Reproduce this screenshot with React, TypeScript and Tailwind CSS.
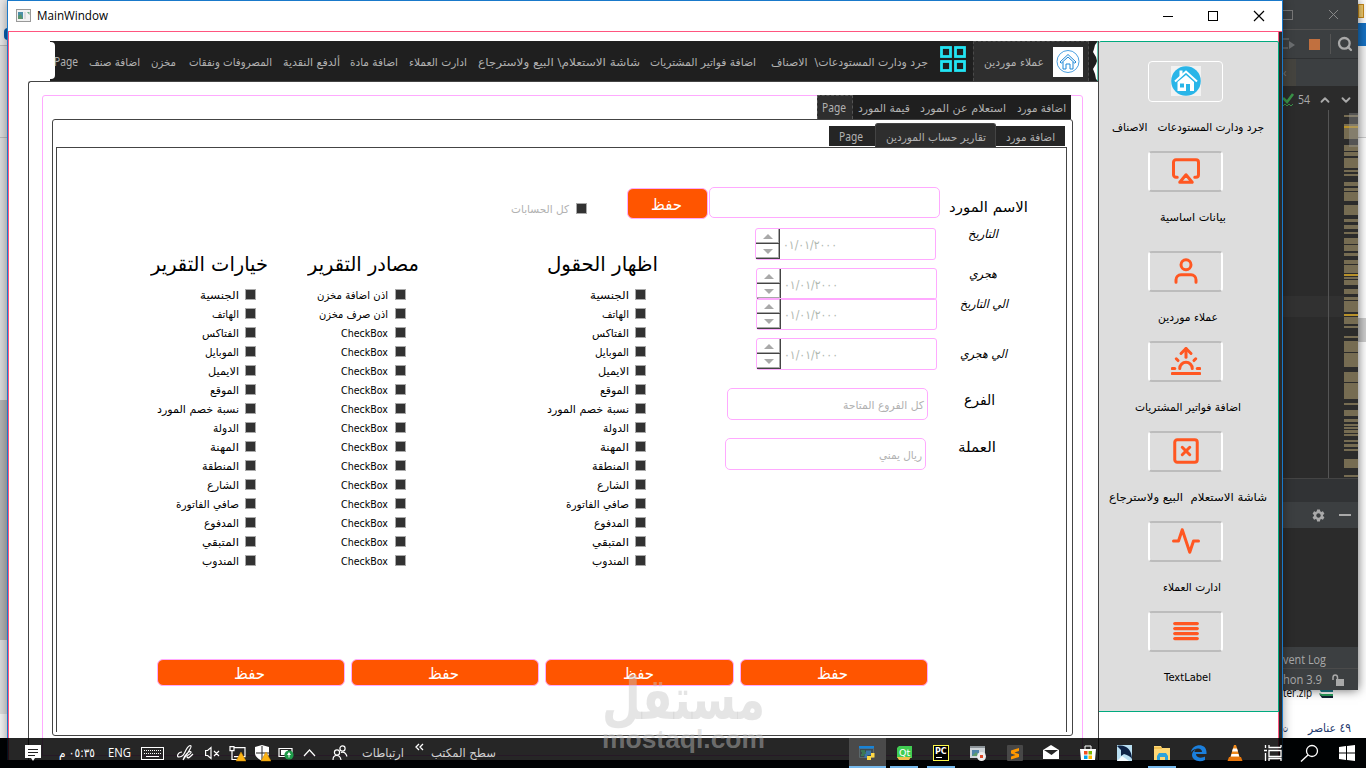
import React, { useLayoutEffect, useRef, useState } from 'react';
import { FiAirplay, FiUser, FiSunrise, FiXSquare, FiActivity, FiAlignJustify } from 'react-icons/fi';
import { MdSettings } from 'react-icons/md';
import { Search, ChevronUp, ChevronDown, X, Check } from 'lucide-react';

interface FitProps {
  text: string;
  w: number;
  className?: string;
}

// Single line of text squeezed or stretched to a fixed width
const Fit: React.FC<FitProps> = ({ text, w, className = '' }) => {
  const ref = useRef<HTMLSpanElement>(null);
  const [scale, setScale] = useState(1);

  useLayoutEffect(() => {
    if (ref.current) setScale(w / ref.current.getBoundingClientRect().width);
  }, []);

  return (
    <span className={`flex shrink-0 items-center whitespace-pre leading-none ${className}`} style={{ width: w }}>
      <span ref={ref} dir="auto" className="shrink-0 origin-left" style={{ transform: `scaleX(${scale})` }}>
        {text}
      </span>
    </span>
  );
};

const topTabs = [
  { text: 'اضافة صنف', w: 51, gap: 'ml-[11px]' },
  { text: 'مخزن', w: 25, gap: 'ml-[11px]' },
  { text: 'المصروفات ونفقات', w: 83, gap: 'ml-[13px]' },
  { text: 'ألدفع النقدية', w: 57, gap: 'ml-[11px]' },
  { text: 'اضافة مادة', w: 48, gap: 'ml-[10px]' },
  { text: 'ادارت العملاء', w: 58, gap: 'ml-[11px]' },
  { text: 'شاشة الاستعلام\\ البيع ولاسترجاع', w: 162, gap: 'ml-[11px]' },
  { text: 'اضافة فواتير المشتريات', w: 106, gap: 'ml-[10px]' },
  { text: 'جرد ودارت المستودعات\\  الاصناف', w: 157, gap: 'ml-[15px]' },
];

const fieldOptions = [
  { text: 'الجنسية', w: 39 },
  { text: 'الهاتف', w: 27 },
  { text: 'الفتاكس', w: 37 },
  { text: 'الموبايل', w: 34 },
  { text: 'الايميل', w: 31 },
  { text: 'الموقع', w: 29 },
  { text: 'نسبة خصم المورد', w: 82 },
  { text: 'الدولة', w: 26 },
  { text: 'المهنة', w: 29 },
  { text: 'المنطقة', w: 37 },
  { text: 'الشارع', w: 32 },
  { text: 'صافي الفاتورة', w: 63 },
  { text: 'المدفوع', w: 35 },
  { text: 'المتبقي', w: 37 },
  { text: 'المندوب', w: 37 },
];

const sourceOptions = [
  { text: 'اذن اضافة مخزن', w: 71 },
  { text: 'اذن صرف مخزن', w: 69 },
  ...Array.from({ length: 13 }, () => ({ text: 'CheckBox', w: 47 })),
];

interface CheckListProps {
  title: string;
  w: number;
  items: { text: string; w: number }[];
  className: string;
  rowClass: string;
}

const CheckList: React.FC<CheckListProps> = ({ title, w, items, className, rowClass }) => (
  <div className={`shrink-0 pt-[31px] ${className}`}>
    <Fit text={title} w={w} className="h-[30px] text-[20px]" />
    <div className="mt-[6px] flex flex-col">
      {items.map((item, i) => (
        <div key={i} className={`flex h-[19px] items-center justify-end ${rowClass}`}>
          <Fit text={item.text} w={item.w} className="pt-[2px] text-[11px]" />
          <span className="size-[11px] shrink-0 border border-[#a9a9a9] bg-[#323232]" />
        </div>
      ))}
    </div>
  </div>
);

const Arrow: React.FC<{ down?: boolean }> = ({ down }) => (
  <svg width="10" height="5" viewBox="0 0 10 5" className={down ? 'rotate-180' : ''}>
    <path d="M5 0L10 5H0Z" fill="#a9a9a9" />
  </svg>
);

const DateSpin: React.FC<{ className: string }> = ({ className }) => (
  <div className={`flex h-[32px] w-[181px] shrink-0 rounded-[3px] border border-[#ffaaff] ${className}`}>
    <div className="flex w-[24px] flex-col">
      <div className="flex h-[15px] items-center justify-center border-b border-r border-[#444] shadow-[inset_-1px_-1px_0_#a9a9a9]">
        <Arrow />
      </div>
      <div className="flex h-[15px] items-center justify-center border-b border-r border-[#444] shadow-[inset_-1px_-1px_0_#a9a9a9]">
        <Arrow down />
      </div>
    </div>
    <Fit text="٠١/٠١/٢٠٠٠" w={54} className="ml-[3px] pt-[2px] text-[12px] text-[#b0b8b0]" />
  </div>
);

const sideItems = [
  { text: 'جرد ودارت المستودعات   الاصناف', w: 152, box: 'h-[90px]', off: 'ml-[13px]', icon: null },
  { text: 'بيانات اساسية', w: 66, box: 'h-[100px]', off: 'ml-[61px]', icon: FiAirplay },
  { text: 'عملاء موردين', w: 60, box: 'h-[90px]', off: 'ml-[59px]', icon: FiUser },
  { text: 'اضافة فواتير المشتريات', w: 106, box: 'h-[90px]', off: 'ml-[36px]', icon: FiSunrise },
  { text: 'شاشة الاستعلام  البيع ولاسترجاع', w: 158, box: 'h-[90px]', off: 'ml-[10px]', icon: FiXSquare },
  { text: 'ادارت العملاء', w: 58, box: 'h-[90px]', off: 'ml-[64px]', icon: FiActivity },
  { text: 'TextLabel', w: 47, box: 'h-[90px]', off: 'ml-[65px]', icon: FiAlignJustify },
];

const Sidebar = () => (
  <div className="w-[181px] shrink-0 border-r border-[#ff557f] pt-[9px]">
    <div className="h-[719px] border-l border-[#444]">
      <div className="-mr-px h-[671px] rounded-t-[2px] border-b border-r border-t border-[#00aa7f] bg-[#dddddd] pt-[19px]">
        {sideItems.map(({ text, w, box, off, icon: Icon }, i) => (
          <div key={text} className={box}>
            {Icon ? (
              <div className="ml-[49px] flex h-[41px] w-[75px] items-center justify-center rounded-[4px] border-2 border-x-white border-y-[#bcbcbc]">
                <Icon size={30} color="#ff5722" strokeWidth={i === 6 ? 2.6 : 2.4} className="-mt-px" />
              </div>
            ) : (
              <div className="ml-[49px] flex h-[41px] w-[75px] items-center justify-center rounded-[4px] border border-white">
                <svg width="30" height="30" viewBox="0 0 30 30" className="-mt-px">
                  <rect width="30" height="30" fill="#f2f2f2" />
                  <circle cx="15" cy="15" r="14.8" fill="#29b5e8" />
                  <path d="M8.500 4.500h3v4l-3 2.500z" fill="#fff" />
                  <path d="M4 15.500L15 5.500l11 10" stroke="#fff" strokeWidth="2" fill="none" />
                  <path d="M15 9l8 7v9h-4v-7h-4v7H6.500v-9z" fill="#fff" />
                  <path d="M9 17.500h4v4H9z" fill="#29b5e8" />
                </svg>
              </div>
            )}
            <Fit text={text} w={w} className={`mt-[16px] h-[18px] text-[11px] ${off}`} />
          </div>
        ))}
      </div>
    </div>
  </div>
);

const TopBar = () => (
  <div className="relative ml-[41px] flex h-[40px] w-[1048px] items-center bg-[#1f1f1f] text-[11px] text-[#b1b1b1]">
    <div className="-mt-px h-[37px] w-[5px] rounded-r-[4px] bg-white" />
    <Fit text="Page" w={24} className="-ml-px mt-[2px] font-['Noto_Sans',sans-serif] text-[12px]" />
    {topTabs.map((tab) => (
      <Fit key={tab.text} text={tab.text} w={tab.w} className={`mt-[3px] ${tab.gap}`} />
    ))}
    <svg className="ml-[12px] mt-[-3px]" width="27" height="27" viewBox="0 0 27 27" fill="none" stroke="#22e3f2" strokeWidth="2.8">
      <rect x="1.500" y="1.500" width="9" height="9" />
      <rect x="15.500" y="1.500" width="9" height="9" />
      <rect x="1.500" y="15.500" width="9" height="9" />
      <rect x="15.500" y="15.500" width="9" height="9" />
    </svg>
    <div className="ml-[6px] flex h-[40px] w-[116px] items-center border border-b-0 border-dashed border-[#4a4a4a] bg-[#2e2e2e]">
      <Fit text="عملاء موردين" w={60} className="ml-[10px] mt-[2px]" />
      <svg className="ml-[9px]" width="30" height="30" viewBox="0 0 30 30" fill="none" stroke="#1e88d8">
        <rect width="30" height="30" fill="#fff" stroke="none" />
        <circle cx="15" cy="14.500" r="11" strokeWidth=".8" />
        <path d="M7 15l8-7.500 8 7.500-1.200 1.200L15 10l-6.800 6.200zM10 15v7h3v-5h4v5h3v-7" strokeWidth="1" />
      </svg>
    </div>
    <svg className="absolute right-0 top-0" width="5" height="40" viewBox="0 0 5 40">
      <path d="M5 0L2 4L1 8L0 11L3 16L4 20L3 23L0 28L2 33L3 38L5 40Z" fill="#fff" />
      <path d="M4.500 0v40" stroke="#00aa7f" strokeWidth=".6" />
    </svg>
  </div>
);

const SaveButton: React.FC<{ className: string }> = ({ className }) => (
  <div className={`flex shrink-0 items-center justify-center rounded-[6px] border border-[#ffaaff] bg-[#ff5500] pr-[3px] pt-[2px] text-[16px] text-white ${className}`}>
    <Fit text="حفظ" w={31} />
  </div>
);

const ReportForm = () => (
  <div className="ml-[3px] flex h-[585px] w-[1011px] flex-col border-x border-t border-[#444] pt-[39px]">
    <div className="flex h-[31px]">
      <Fit text="كل الحسابات" w={58} className="ml-[454px] mt-[13px] h-[18px] text-[11px] text-[#b1b1b1]" />
      <span className="ml-[7px] mt-[16px] size-[11px] shrink-0 border border-[#a9a9a9] bg-[#323232]" />
      <SaveButton className="ml-[40px] mt-px h-[31px] w-[81px]" />
      <div className="ml-px h-[31px] w-[231px] rounded-[5px] border border-[#ffaaff]" />
      <Fit text="الاسم المورد" w={79} className="ml-[9px] mt-[10px] h-[20px] text-[14px]" />
    </div>

    <div className="flex h-[441px]">
      <CheckList title="خيارات التقرير" w={117} items={fieldOptions} className="ml-[94px] w-[117px]" rowClass="gap-[6px] pr-[12px]" />
      <CheckList title="مصادر التقرير" w={111} items={sourceOptions} className="ml-[40px] w-[111px]" rowClass="gap-[7px] pr-[13px]" />
      <CheckList title="اظهار الحقول" w={111} items={fieldOptions} className="ml-[128px] w-[111px]" rowClass="gap-[6px] pr-[12px]" />

      <div className="ml-[67px] flex w-[212px] flex-col">
        <DateSpin className="ml-[30px] mt-[10px]" />
        <DateSpin className="ml-[31px] mt-[8px]" />
        <DateSpin className="-mt-[2px] ml-[31px]" />
        <DateSpin className="ml-[31px] mt-[8px]" />
        <div className="ml-[2px] mt-[18px] flex h-[32px] w-[201px] justify-end rounded-[5px] border border-[#ffaaff] pr-[3px] pt-[3px]">
          <Fit text="كل الفروع المتاحة" w={81} className="text-[11px] text-[#b1b1b1]" />
        </div>
        <div className="mt-[18px] flex h-[32px] w-[201px] justify-end rounded-[5px] border border-[#ffaaff] pr-[3px] pt-[3px]">
          <Fit text="ريال يمني" w={43} className="text-[11px] text-[#b1b1b1]" />
        </div>
      </div>

      <div className="ml-[21px] flex w-[52px] flex-col">
        <Fit text="التاريخ" w={30} className="ml-[10px] mt-[6px] h-[20px] text-[12px] italic" />
        <Fit text="هجري" w={28} className="ml-[11px] mt-[20px] h-[20px] text-[12px] italic" />
        <Fit text="الي التاريخ" w={48} className="ml-[2px] mt-[10px] h-[20px] text-[12px] italic" />
        <Fit text="الي هجري" w={47} className="ml-[2px] mt-[30px] h-[20px] text-[12px] italic" />
        <Fit text="الفرع" w={31} className="ml-[6px] mt-[26px] h-[20px] text-[14px]" />
        <Fit text="العملة" w={38} className="mt-[27px] h-[20px] text-[14px]" />
      </div>
    </div>

    <div className="ml-[100px] flex gap-[6px]">
      <SaveButton className="h-[27px] w-[188px]" />
      <SaveButton className="h-[27px] w-[188px]" />
      <SaveButton className="h-[27px] w-[189px]" />
      <SaveButton className="h-[27px] w-[188px]" />
    </div>
  </div>
);

const MainWindow = () => (
  <div className="absolute left-[7px] top-0 h-[760px] w-[1276px] border-x border-t border-[#1979ca] bg-white shadow-[0_0_10px_rgba(0,0,0,0.4)]">
    <div className="flex h-[30px] items-center">
      <svg className="ml-[8px] mt-[-2px]" width="15" height="13" viewBox="0 0 15 13">
        <rect x=".5" y=".5" width="14" height="12" fill="#f2f2f2" stroke="#999" />
        <path d="M2 3h5v7H2z" fill="#4a8fa8" />
        <path d="M2 7l3-2 2 5H2z" fill="#59946c" />
        <path d="M8 3h2v7H8z" fill="#ddd" />
        <path d="M11 3h2.500v3z" fill="#6cae86" />
      </svg>
      <Fit text="MainWindow" w={71} className="ml-[6px] font-['Open_Sans',sans-serif] text-[12px]" />
      <svg className="ml-[1054px]" width="104" height="12" viewBox="0 0 104 12" fill="none" stroke="#000">
        <path d="M1 6.500h10" />
        <rect x="46.500" y="1.500" width="9" height="9" />
        <path d="M92 1l10 10M102 1l-10 10" strokeWidth="1.200" />
      </svg>
    </div>
    <div className="flex h-[729px] border-l border-t border-[#ff557f]">
      <div className="w-[1089px] pt-[9px]">
        <TopBar />
        <div className="ml-[19px] h-[679px] rounded-tl-[3px] border-l border-t border-[#444] pl-[13px] pt-[13px]">
          <div className="h-[661px] w-[1041px] rounded-t-[3px] border border-[#ffaaff]">
            <div className="-mt-px mr-[11px] flex h-[24px] justify-end text-[11px] text-[#b1b1b1]">
              <div className="flex bg-[#1f1f1f]">
                <div className="flex w-[36px] border border-b-0 border-dashed border-[#555] bg-[#2e2e2e] pl-[4px]">
                  <Fit text="Page" w={24} className="pt-px font-['Noto_Sans',sans-serif] text-[12px]" />
                </div>
                <Fit text="قيمة المورد" w={52} className="ml-[5px] pt-[2px]" />
                <Fit text="استعلام عن المورد" w={86} className="ml-[10px] pt-[2px]" />
                <Fit text="اضافة مورد" w={49} className="ml-[11px] mr-[5px] pt-[2px]" />
              </div>
            </div>
            <div className="ml-[9px] h-[617px] w-[1021px] rounded-[3px] border border-[#444]">
              <div className="mr-[7px] flex h-[27px] items-end justify-end text-[11px] text-[#b1b1b1]">
                <div className="mb-px flex h-[20px] w-[46px] bg-[#252525] pl-[10px]">
                  <Fit text="Page" w={24} className="pt-[2px] font-['Noto_Sans',sans-serif] text-[12px]" />
                </div>
                <div className="flex h-[24px] w-[121px] rounded-t-[3px] border border-b-0 border-[#444] bg-[#2e2e2e] pl-[10px]">
                  <Fit text="تقارير حساب الموردين" w={100} className="pt-[3px]" />
                </div>
                <div className="mb-px flex h-[20px] w-[69px] bg-[#252525] pl-[10px]">
                  <Fit text="اضافة مورد" w={49} className="pt-[2px]" />
                </div>
              </div>
              <ReportForm />
            </div>
          </div>
        </div>
      </div>
      <Sidebar />
      <div className="w-[3px] bg-[#2b2b2b]" />
    </div>
  </div>
);

// [top, bottom] of each warning in the editor's error stripe
const stripes = [
  [115, 117], [124, 139], [145, 151], [152, 156], [158, 168], [170, 172], [174, 176], [182, 186], [188, 191],
  [192, 201], [205, 215], [219, 222], [225, 229], [232, 234], [238, 244], [245, 251], [253, 256], [260, 264],
  [265, 273], [277, 279], [280, 285], [289, 294], [297, 300], [301, 312], [317, 324], [326, 328], [336, 338],
  [341, 352], [353, 367], [372, 382], [383, 399], [403, 405], [410, 416], [419, 422], [424, 426], [427, 429],
  [430, 433], [434, 436], [440, 442], [444, 447], [449, 451], [459, 468], [475, 477],
];

const EditorWindow = () => (
  <div className="absolute left-[1283px] top-0 h-[690px] w-[75px] overflow-hidden bg-[#2b2b2b] font-['Open_Sans',sans-serif] text-[12px] text-[#a9a9a9] shadow-[0_0_10px_rgba(0,0,0,0.6)]">
    <div className="flex h-[30px] items-center border-b border-[#515151] bg-[#3c3f41] text-[#8a8a8a]">
      <span className="size-[10px] border border-l-0 border-[#777]" />
      <X size={17} strokeWidth={1.4} className="ml-[32px]" />
    </div>
    <div className="flex h-[29px] items-center border-b border-[#2f3133] bg-[#3c3f41]">
      <svg width="13" height="14" viewBox="0 0 13 14">
        <path d="M0 2h6M0 11h5" stroke="#5a5d5f" strokeWidth="2" />
        <path d="M6 4l6 4-6 4z" fill="#6b6e70" />
      </svg>
      <span className="ml-[13px] size-[11px] bg-[#c1703f]" />
      <span className="ml-[10px] h-[20px] w-px bg-[#555]" />
      <Search size={16} strokeWidth={3.4} className="ml-[6px]" />
    </div>
    <div className="flex h-[27px] items-center bg-[#3c3f41]">
      <div className="flex h-full w-[13px] items-center bg-[#45443f] text-[#777]">‹</div>
    </div>
    <div className="flex h-[24px] items-center pt-[4px]">
      <svg width="12" height="14" viewBox="0 0 12 14" fill="none" stroke="#3a9348">
        <path d="M0 5l4 4 6-8" strokeWidth="2.6" />
        <path d="M0 13l2-2 2 2 2-2 2 2 2-2" />
      </svg>
      <Fit text="54" w={12} className="ml-[3px]" />
      <ChevronUp size={14} strokeWidth={3.2} className="ml-[8px]" />
      <ChevronDown size={14} strokeWidth={3.2} className="ml-[7px]" />
    </div>
    <svg width="75" height="368" viewBox="0 110 75 368">
      <rect y="296" width="61" height="21" fill="#313131" />
      <path d="M45.500 110v368" stroke="#555" />
      {stripes.map(([top, bottom]) => (
        <rect key={top} x="61" y={top} width="14" height={bottom - top} fill="#766c52" />
      ))}
      <rect x="61" y="126" width="14" height="2" fill="#b9922a" />
      <rect x="61" y="274" width="14" height="2" fill="#b9922a" />
      <rect x="61" y="314" width="14" height="2" fill="#b9922a" />
      <rect x="66" y="113" width="9" height="34" fill="#a0a0a0" fillOpacity=".35" />
    </svg>
    <div className="h-[24px] border-t border-[#444] bg-[#313335]" />
    <div className="flex h-[26px] items-center bg-[#3c3f41]">
      <MdSettings size={15} className="ml-[28px]" />
      <span className="ml-[13px] h-[2px] w-[12px] bg-[#a9a9a9]" />
    </div>
    <div className="h-[119px]" />
    <div className="flex h-[22px] items-center border-b border-[#4b4b4b] bg-[#3c3f41] pt-[4px]">
      <Fit text="vent Log" w={43} />
    </div>
    <div className="flex h-[22px] items-center bg-[#3c3f41]">
      <Fit text="hon 3.9" w={39} />
      <svg width="12" height="12" viewBox="0 0 12 12" className="ml-[10px]">
        <path d="M1 6V3.500C1 0 5.500 0 5.500 3.500V6" fill="none" stroke="#a9a9a9" strokeWidth="1.500" />
        <path d="M4 5h8v7H4z" fill="#a9a9a9" />
      </svg>
    </div>
  </div>
);

const Backdrop = () => (
  <>
    <div className="absolute left-0 top-0 h-[738px] w-[8px] bg-[#dedede]">
      <div className="h-[46px] border-b border-[#bbb] bg-[#e9e9e9] pt-[28px]">
        <div className="ml-[4px] h-[12px] w-[8px] rounded-full bg-[#0b5fb0]" />
      </div>
      <div className="h-[92px] border-b border-[#bbb]" />
      <div className="mt-[262px] h-[240px] w-[7px] bg-[#b5b5b5]" />
      <div className="mt-[74px] h-[24px] bg-[#f5f5f5]" />
    </div>
    <div className="absolute right-0 top-0 h-[738px] w-[83px] bg-white">
      <div className="ml-auto w-[8px]">
        <div className="h-[23px] pt-[4px]">
          <div className="h-[14px] w-[6px] border border-[#c98c1c] bg-[#f6d070]" />
        </div>
        <div className="h-[23px] bg-[#1672c4]" />
        <div className="h-[92px] border-b border-[#ccc] bg-[#f5f5f5]" />
        <div className="mt-[180px] h-[24px] bg-[#cdcdcd]" />
      </div>
      {/* only the lower half of this row shows under the editor */}
      <div className="mt-[348px] flex h-[9px] items-end overflow-hidden">
        <Fit text="ter.zip" w={29} className="font-['Open_Sans',sans-serif] text-[12px]" />
        <svg className="ml-[6px]" width="16" height="14" viewBox="0 0 16 14">
          <path d="M0 2h15v5H3z" fill="#1b7e8c" />
          <path d="M1 8l3 1h11v2H3z" fill="#2b9f5c" />
          <path d="M1 9l3 4h11v-2H4z" fill="#123" />
        </svg>
      </div>
      <div className="mt-[18px] flex h-[22px] items-center text-[12px] text-[#1f3a6e]">
        <Fit text="ت" w={5} />
        <Fit text="٤٩ عناصر" w={43} className="ml-[20px]" />
      </div>
    </div>
  </>
);

const Warn = () => <path d="M12 7l5 9H7z" fill="#fdb414" stroke="#c98500" strokeWidth=".5" />;

const apps = [
  {
    active: true,
    line: 'w-full',
    icon: (
      <>
        <path d="M.5 3.500h14v9H.5z" fill="#3f4b50" stroke="#5c686c" />
        <path d="M0 1h15v2.500H0z" fill="#1883d7" />
        <path d="M2 6h4M3 8h5M2 10h3" stroke="#3ba55c" />
        <path d="M7 5.500h5v4.500H8.500v3H5.500V9H7z" fill="#3c76a8" />
        <path d="M12 8h3.500v4.500H12V15H8v-4h4z" fill="#ffd845" />
      </>
    ),
  },
  {
    line: 'w-[28px]',
    icon: (
      <>
        <path d="M3 1h13v12H1V3z" fill="#41cd52" />
        <text x="3" y="11" fontSize="9.500" fill="#fff">Qt</text>
        <path d="M1 12h14l-2 3H3z" fill="#efc04a" />
      </>
    ),
  },
  {
    line: 'w-[28px]',
    icon: (
      <>
        <rect x=".5" y=".5" width="15" height="15" fill="#000" stroke="#fcf84a" />
        <text x="2" y="9" fontSize="8" fontWeight="700" fill="#fff">PC</text>
        <path d="M3 12.500h6" stroke="#fff" />
      </>
    ),
  },
  {
    icon: (
      <>
        <path d="M0 1h15v12H0z" fill="#cfd4d8" />
        <path d="M0 1h15v2H0z" fill="#8d9499" />
        <path d="M2 5h7v6H2z" fill="#4f84a8" />
        <path d="M2 11l4-4 3 4z" fill="#5c9c6c" />
        <circle cx="11.500" cy="11.500" r="4.500" fill="#eee" />
        <path d="M10 10h3v3h-3z" fill="#e04a2a" />
      </>
    ),
  },
  {
    icon: (
      <>
        <rect width="16" height="16" rx="1" fill="#474747" />
        <path d="M12 3v3L7.500 7.500 12 9v3l-8 2.500v-3L8.500 10 4 8.500v-3z" fill="#ff9800" />
      </>
    ),
  },
  {
    icon: (
      <>
        <path d="M0 5l8-5 8 5v9H0z" fill="#fff" />
        <path d="M1 5h14L8.500 10z" fill="#262626" />
      </>
    ),
  },
  {
    icon: (
      <>
        <path d="M0 4h16l-1 11H1z" fill="#fff" />
        <path d="M5 4V1h6v3" stroke="#fff" fill="none" />
        <path d="M4 6h3.500v3.500H4z" fill="#f25022" />
        <path d="M8.500 6H12v3.500H8.500z" fill="#7fba00" />
        <path d="M4 10.500h3.500V14H4z" fill="#00a4ef" />
        <path d="M8.500 10.500H12V14H8.500z" fill="#ffb900" />
      </>
    ),
  },
  {
    icon: (
      <>
        <path d="M0 0h15v16H0z" fill="#b9dff2" />
        <path d="M0 1c8-2 15 3 15 13-2-3-5-4-8-5l-3 2 0-6z" fill="#0d2346" />
        <path d="M0 16l5-5 7 5z" fill="#f5fbff" />
      </>
    ),
  },
  {
    line: 'w-[28px]',
    icon: (
      <>
        <path d="M0 1h7l1 2h8v12H0z" fill="#ffd876" />
        <path d="M0 3h8" stroke="#e5ac32" />
        <path d="M3 15v-4l2-3h7l2 3v4h-3v-3H6v3z" fill="#2ea3dc" />
      </>
    ),
  },
  {
    icon: <path d="M0 7C1-1 15-3 15.500 7v2H5c0 4 6 4.500 9 2.500v3.500C8 18 1 15 1 10c0-3 2-5 5-6-2 1-2.500 2-2.500 3H11C11 3 5 2 0 7z" fill="#1b7fdc" />,
  },
  {
    icon: (
      <>
        <path d="M7 0h2l4 13H3z" fill="#f08a1c" />
        <path d="M6 3.500h4l1 3H5zM4.500 9h7l.7 2.500H3.800z" fill="#fff" />
        <path d="M2 12h12l1.500 4H.5z" fill="#e8770c" />
      </>
    ),
  },
  {
    icon: <path d="M5 0v2.500h12M17 0v2.500M5 5.500h12v6H5zM5 16v-2.500h12V16M1.500 0v3M1.500 8v8M0 5.500h3" stroke="#fff" fill="none" strokeWidth="1.300" />,
  },
  {
    icon: (
      <>
        <circle cx="11" cy="6" r="5.500" stroke="#fff" fill="none" strokeWidth="1.300" />
        <path d="M7 10l-7 6.500" stroke="#fff" strokeWidth="1.400" />
      </>
    ),
  },
  {
    icon: <path d="M1 2l7-1v6.500H1zM9 .9L17 0v7.500H9zM1 8.500h7V15l-7-1zM9 8.500h8V16l-8-1z" fill="#fff" />,
  },
];

const Taskbar = () => (
  <div className="absolute left-0 top-[738px] flex h-[30px] w-[1366px] bg-black/85 text-white">
    <div className="flex h-[30px] w-[849px] items-center">
      <svg className="ml-[25px]" width="16" height="16" viewBox="0 0 16 16">
        <path d="M0 0h16v13h-6l-2 3-2-3H0z" fill="#fff" />
        <path d="M3 4.500h10M3 7.500h10M3 10.500h7" stroke="#222" />
      </svg>
      <Fit text="٠٥:٣٥ م" w={36} className="ml-[18px] text-[12px]" />
      <Fit text="ENG" w={23} className="ml-[13px] font-['Open_Sans',sans-serif] text-[12px]" />
      <svg className="ml-[10px]" width="23" height="13" viewBox="0 0 23 13" fill="none" stroke="#fff">
        <rect x=".5" y=".5" width="22" height="12" />
        <path d="M3 3.500h17M3 6.500h17" strokeDasharray="1 1" />
        <path d="M5 9.500h13" />
      </svg>
      <svg className="ml-[13px]" width="17" height="16" viewBox="0 0 17 16" fill="none" stroke="#fff" strokeWidth="1.200">
        <path d="M5 7c-4 0-6 5-3 5 4 0 5-3 7-7s4-5 5-4-2 5-8 14M6 15c1-5 7-10 8-8s-5 3-4 5 3 0 6-3" />
      </svg>
      <svg className="ml-[11px]" width="15" height="14" viewBox="0 0 15 14" fill="none" stroke="#fff" strokeWidth="1.200">
        <path d="M.6 4.500h2L6 1.500v11L2.600 9.500h-2zM9 5l5 5M14 5l-5 5" />
      </svg>
      <svg className="ml-[9px]" width="17" height="17" viewBox="0 0 17 17" fill="none" stroke="#fff" strokeWidth="1.200">
        <path d="M5 2.600h11v9H5M1 1.600h4v4H1zM3 6v8.500h8" />
        <Warn />
      </svg>
      <svg className="ml-[8px]" width="17" height="17" viewBox="0 0 17 17">
        <path d="M8 0l7 2v6c0 4-4 6-7 8-3-2-7-4-7-8V2z" fill="#fff" />
        <path d="M8 1v14M2 8h13" stroke="#222" />
        <Warn />
      </svg>
      <svg className="ml-[7px]" width="16" height="14" viewBox="0 0 16 14">
        <path d="M1 2.500h13v8H1z" fill="none" stroke="#fff" strokeWidth="1.200" />
        <path d="M3 4h7v5H3z" fill="#fff" />
        <circle cx="11" cy="9" r="4.600" fill="#1f9b4a" />
        <path d="M11 6l2 3h-1.500v2.500h-1V9H9z" fill="#fff" />
      </svg>
      <svg className="ml-[9px]" width="13" height="8" viewBox="0 0 13 8">
        <path d="M1 7l5.500-6L12 7" fill="none" stroke="#fff" strokeWidth="1.200" />
      </svg>
      <svg className="ml-[16px]" width="16" height="16" viewBox="0 0 16 16" fill="none" stroke="#fff" strokeWidth="1.200">
        <circle cx="10.500" cy="3.500" r="2.600" />
        <circle cx="5" cy="7.500" r="2.600" />
        <path d="M1 15c0-6 7-6 8 0M9 7.500c3-1 5 1 6 4" />
      </svg>
      <Fit text="ارتباطات" w={42} className="ml-[14px] text-[12px] text-[#d0d0d0]" />
      <svg className="-mt-[12px] ml-[11px]" width="9" height="8" viewBox="0 0 9 8">
        <path d="M4 1L1 4l3 3M8 1L5 4l3 3" fill="none" stroke="#fff" strokeWidth="1.300" />
      </svg>
      <Fit text="سطح المكتب" w={65} className="ml-[7px] text-[12px] text-[#d0d0d0]" />
    </div>
    {apps.map(({ icon, line, active }, i) => (
      <div key={i} className={`flex h-[30px] w-[36.8px] shrink-0 flex-col items-center pt-[7px] ${active ? 'bg-[#4a4a4a]' : ''}`}>
        <svg width="16" height="16" viewBox="0 0 16 16" className="shrink-0 overflow-visible">
          {icon}
        </svg>
        {line && <div className={`mt-[5px] h-[2px] bg-[#76b9ed] ${line}`} />}
      </div>
    ))}
  </div>
);

export default function App() {
  return (
    <div className="relative h-[768px] w-[1366px] overflow-hidden bg-[#001018] font-['DejaVu_Sans',sans-serif] text-black">
      <Backdrop />
      <EditorWindow />
      <MainWindow />
      <Taskbar />
      <div className="absolute left-[602px] top-[672px] text-[rgba(197,197,197,0.45)]">
        <Fit text="مستقل" w={163} className="h-[54px] text-[58px] font-bold" />
        <Fit text="mostaql.com" w={163} className="h-[26px] font-['Liberation_Sans',sans-serif] text-[26px] font-bold" />
      </div>
    </div>
  );
}
